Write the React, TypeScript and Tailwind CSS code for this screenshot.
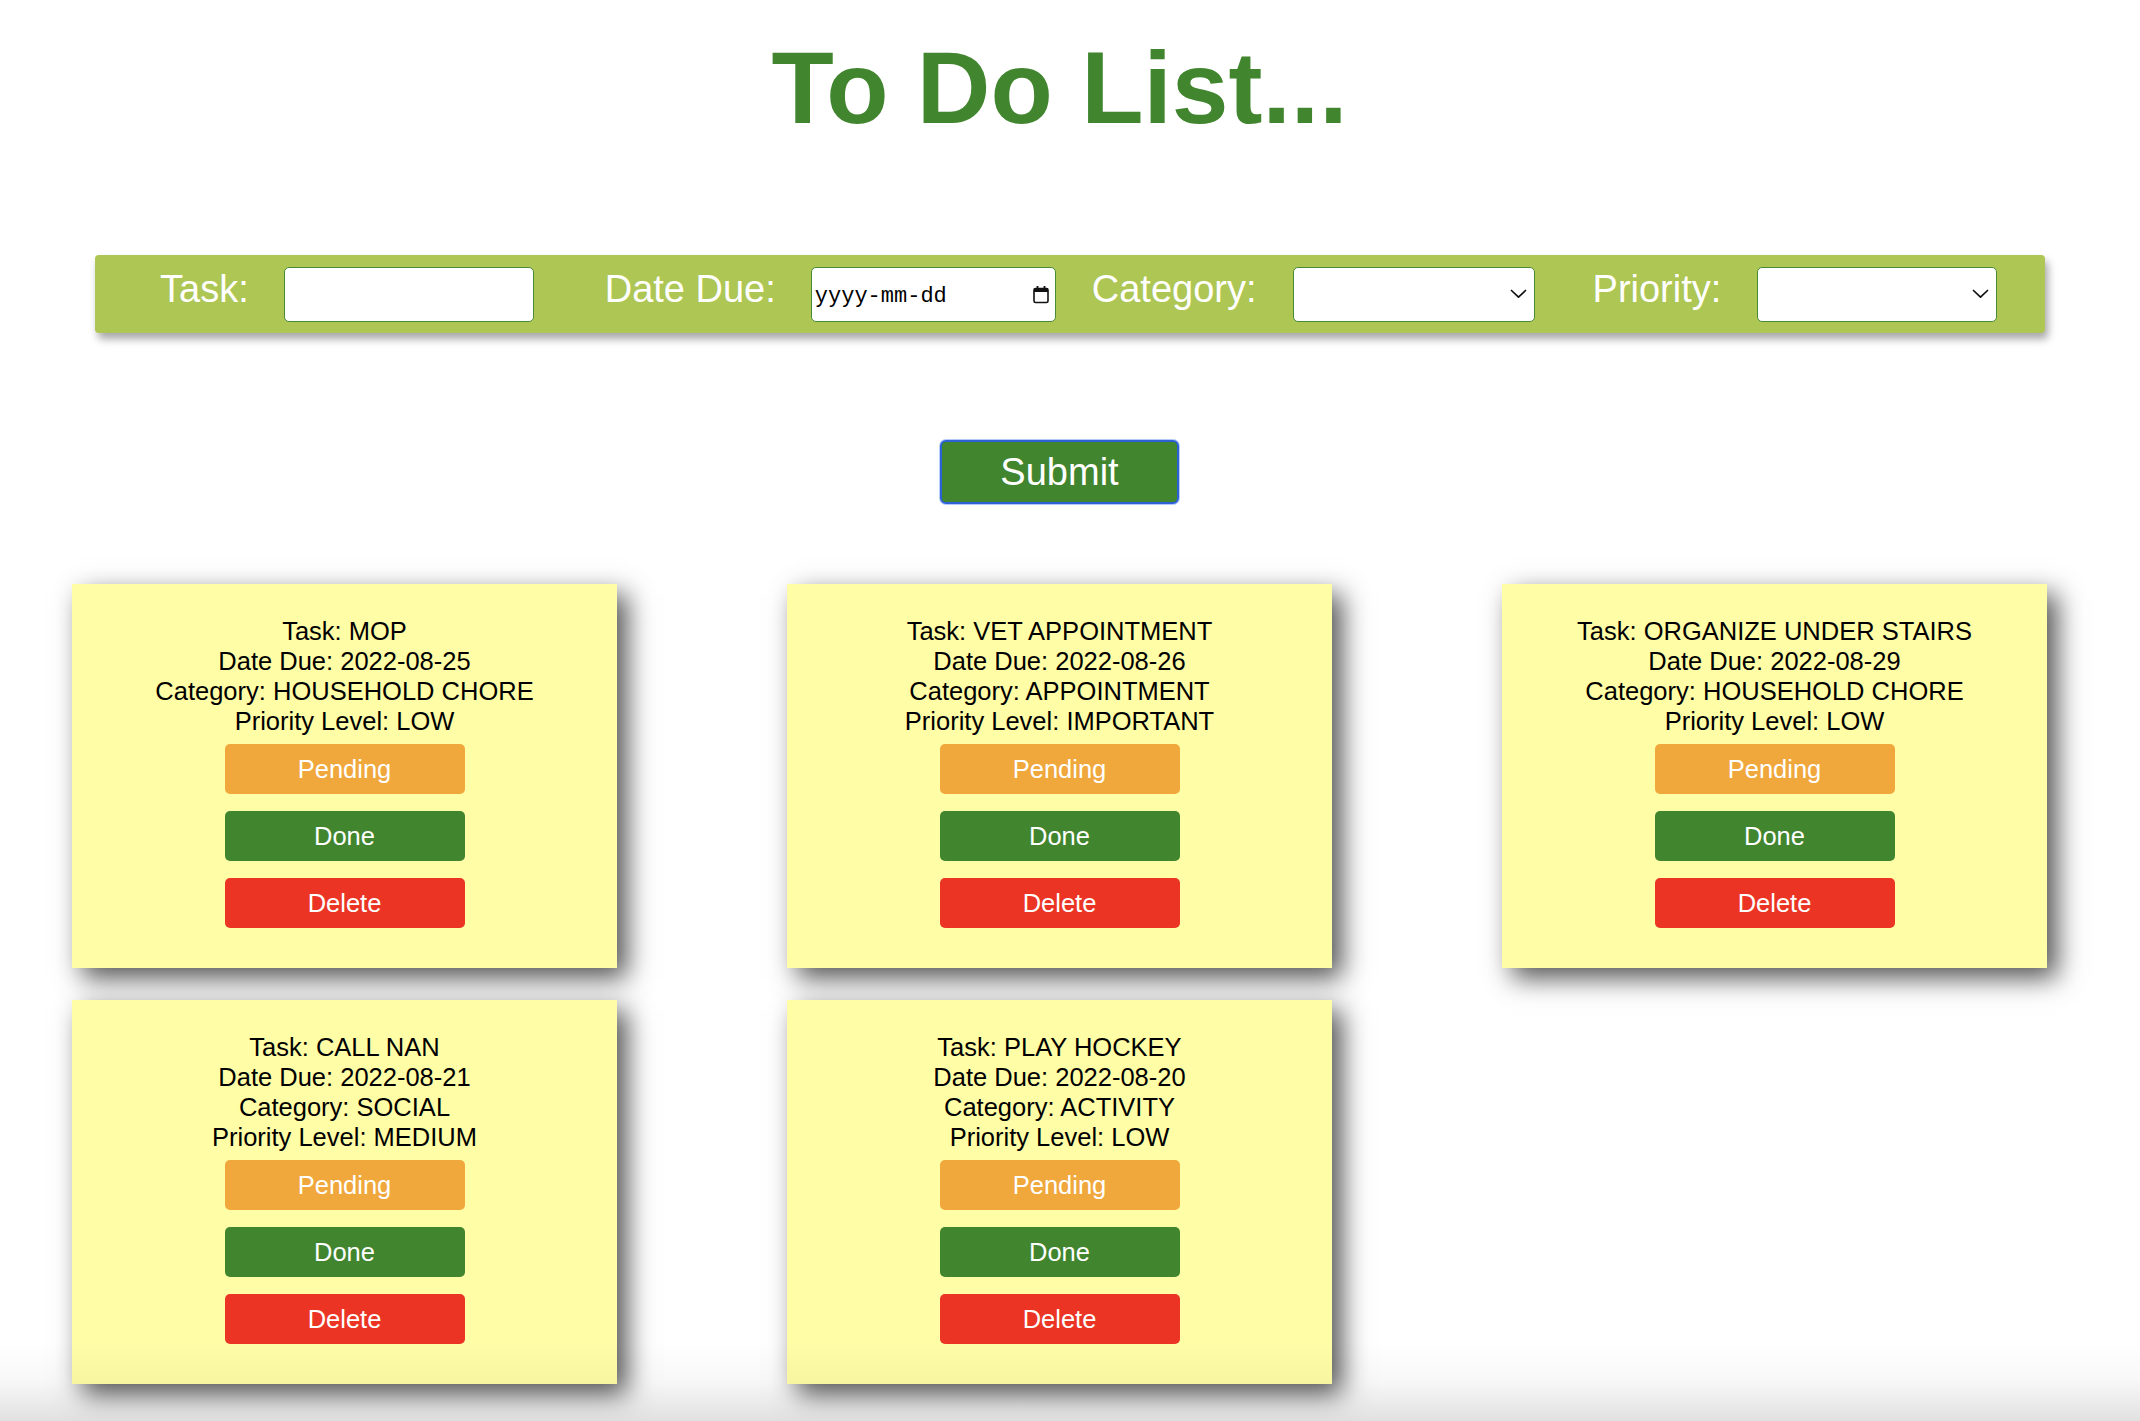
import React from "react";

type Task = { task: string; date: string; category: string; priority: string };

const tasks: Task[] = [
  { task: "MOP", date: "2022-08-25", category: "HOUSEHOLD CHORE", priority: "LOW" },
  { task: "VET APPOINTMENT", date: "2022-08-26", category: "APPOINTMENT", priority: "IMPORTANT" },
  { task: "ORGANIZE UNDER STAIRS", date: "2022-08-29", category: "HOUSEHOLD CHORE", priority: "LOW" },
  { task: "CALL NAN", date: "2022-08-21", category: "SOCIAL", priority: "MEDIUM" },
  { task: "PLAY HOCKEY", date: "2022-08-20", category: "ACTIVITY", priority: "LOW" },
];

function Chevron() {
  return (
    <svg width="17" height="10" viewBox="0 0 17 10" fill="none">
      <path d="M1.5 1.5 L8.5 8.2 L15.5 1.5" stroke="#111" strokeWidth="1.7" strokeLinecap="round" strokeLinejoin="round" />
    </svg>
  );
}

function CalendarIcon() {
  return (
    <svg width="16" height="19" viewBox="0 0 16 19" fill="none">
      <rect x="1" y="3.5" width="14" height="14" rx="1.5" stroke="#111" strokeWidth="1.6" fill="none" />
      <rect x="1" y="3.5" width="14" height="3.5" fill="#111" />
      <rect x="3.6" y="1" width="1.8" height="3.5" fill="#111" />
      <rect x="10.6" y="1" width="1.8" height="3.5" fill="#111" />
    </svg>
  );
}

function Card({ t }: { t: Task }) {
  return (
    <div className="flex h-[384px] w-[545px] flex-col items-center bg-[#fffda6] pt-[32px] shadow-[10px_10px_25px_rgba(0,0,0,0.68)]">
      <div className="text-center text-[25.5px] leading-[30px] text-black">
        <div>Task: {t.task}</div>
        <div>Date Due: {t.date}</div>
        <div>Category: {t.category}</div>
        <div>Priority Level: {t.priority}</div>
      </div>
      <button className="mt-[8px] flex h-[50px] w-[240px] items-center justify-center rounded-[5px] bg-[#f0a73c] text-[25.5px] text-white">
        Pending
      </button>
      <button className="mt-[17px] flex h-[50px] w-[240px] items-center justify-center rounded-[5px] bg-[#41852f] text-[25.5px] text-white">
        Done
      </button>
      <button className="mt-[17px] flex h-[50px] w-[240px] items-center justify-center rounded-[5px] bg-[#eb3424] text-[25.5px] text-white">
        Delete
      </button>
    </div>
  );
}

export default function App() {
  return (
    <div className="relative h-[1421px] w-full overflow-hidden bg-white font-['Liberation_Sans',Arial,Helvetica,sans-serif]">
      <div className="w-[2119px]">
        <h1 className="mt-[38px] text-center text-[102px] font-bold leading-[100px] text-[#41852f]">
          To Do List...
        </h1>
      </div>

      <div className="mx-[95px] mt-[117px] flex h-[78px] items-center rounded-[4px] bg-[#aec654] pl-[65px] shadow-[3px_6px_8px_rgba(0,0,0,0.35)]">
        <span className="mb-[10px] text-[38px] leading-none text-white">Task:</span>
        <input
          type="text"
          className="ml-[35px] h-[55px] w-[250px] rounded-[5px] border border-[#4a8a35] bg-white outline-none"
        />
        <span className="mb-[10px] ml-[71px] text-[38px] leading-none text-white">Date Due:</span>
        <div className="ml-[35px] flex h-[55px] w-[245px] items-center justify-between rounded-[5px] border border-[#4a8a35] bg-white pl-[3px] pr-[6px]">
          <span className="pt-[5px] font-['Liberation_Mono','Courier_New',monospace] text-[22px] leading-none text-black">
            yyyy-mm-dd
          </span>
          <CalendarIcon />
        </div>
        <span className="mb-[10px] ml-[36px] text-[38px] leading-none text-white">Category:</span>
        <div className="ml-[36px] flex h-[55px] w-[242px] items-center justify-end rounded-[5px] border border-[#4a8a35] bg-white pr-[7px]">
          <Chevron />
        </div>
        <span className="mb-[10px] ml-[58px] text-[38px] leading-none text-white">Priority:</span>
        <div className="ml-[36px] flex h-[55px] w-[240px] items-center justify-end rounded-[5px] border border-[#4a8a35] bg-white pr-[7px]">
          <Chevron />
        </div>
      </div>

      <div className="mt-[107px] flex w-[2119px] justify-center">
        <button className="flex h-[64px] w-[239px] items-center justify-center rounded-[6px] border-2 border-[#2c62d4] bg-[#41852f] text-[38px] leading-none text-white shadow-[0_0_0_1px_rgba(120,160,240,0.55)]">
          Submit
        </button>
      </div>

      <div className="mt-[80px] grid grid-cols-[545px_545px_545px] gap-x-[170px] gap-y-[32px] pl-[72px]">
        {tasks.map((t, i) => (
          <Card key={i} t={t} />
        ))}
      </div>

      <div className="pointer-events-none absolute bottom-0 left-0 right-0 h-[80px] bg-linear-to-b from-transparent via-black/[0.03] to-black/[0.12]" />
    </div>
  );
}
